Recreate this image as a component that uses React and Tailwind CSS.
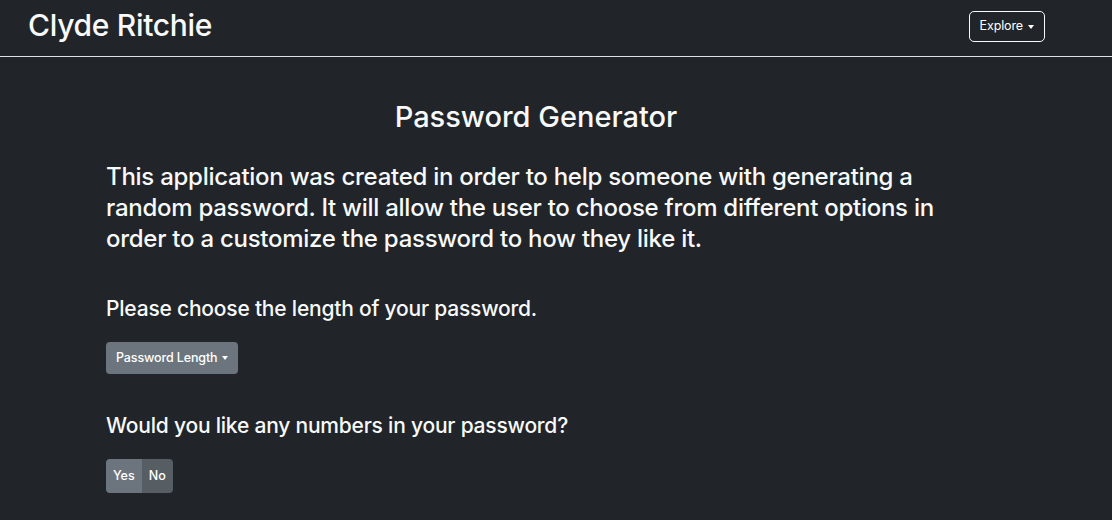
export default function App() {
  return (
    <div className="min-h-[520px] bg-[#212529] text-[#f8f9fa] font-['Inter',sans-serif]">
      <nav className="flex h-[57px] items-center justify-between border-b border-[#dee2e6] pl-[28px] pr-[67px]">
        <span className="mb-[6px] text-[30px] font-medium leading-none tracking-[-0.01em]">Clyde Ritchie</span>
        <button className="mb-[3px] flex h-[31px] items-center gap-[5px] rounded-[5px] border border-[#f8f9fa] px-[10px] text-[12.5px] tracking-[-0.01em] text-white">
          Explore
          <span className="border-x-[3.5px] border-t-[4px] border-x-transparent border-t-white" />
        </button>
      </nav>

      <main className="ml-[106px] w-[860px] pt-[43px]">
        <h2 className="text-center text-[29px] font-medium leading-[1.2]">Password Generator</h2>

        <p className="mt-[26px] text-[24px] font-medium leading-[31px] tracking-[-0.011em]">
          This application was created in order to help someone with generating a random password. It will allow the
          user to choose from different options in order to a customize the password to how they like it.
        </p>

        <h5 className="mt-[42px] text-[21px] font-medium leading-[1.2] tracking-[-0.01em]">Please choose the length of your password.</h5>
        <button className="mt-[21px] flex h-[32px] items-center gap-[5px] rounded-[4px] bg-[#6c757d] px-[10px] text-[12.5px] font-medium tracking-[-0.01em] text-white">
          Password Length
          <span className="border-x-[3.5px] border-t-[4px] border-x-transparent border-t-white" />
        </button>

        <h5 className="mt-[39px] text-[21px] font-medium leading-[1.2] tracking-[-0.01em]">Would you like any numbers in your password?</h5>
        <div className="mt-[21px] inline-flex overflow-hidden rounded-[4px] text-[12.5px] font-medium text-white">
          <button className="flex h-[34px] items-center bg-[#6c757d] px-[7px]">Yes</button>
          <button className="flex h-[34px] items-center bg-[#565e64] px-[7px]">No</button>
        </div>
      </main>
    </div>
  );
}
